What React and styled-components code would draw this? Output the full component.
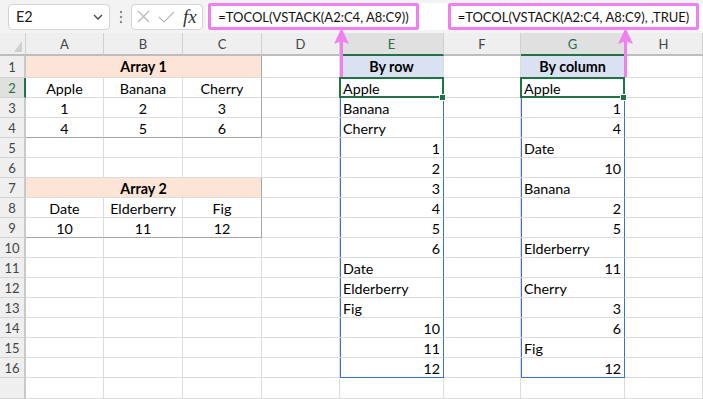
import React from 'react';
import styled, { createGlobalStyle } from 'styled-components';

const Global = createGlobalStyle`
  html, body { margin: 0; padding: 0; background: #fff; }
  body { font-family: Lato, "Liberation Sans", sans-serif; }
`;

const COLS = [26, 78, 79, 79, 78, 104, 77, 104, 78];
const PINK = '#f27ff0';
const GREEN = '#217346';
const BLUE = '#3a6fd0';
const GRID = '#dcdcdc';
const DARK = '#a6a6a6';

const Page = styled.div`
  position: relative;
  width: 703px;
  height: 399px;
  overflow: hidden;
  background: #fff;
`;

const Toolbar = styled.div`
  display: flex;
  align-items: center;
  height: 33px;
  background: #f3f3f3;
  padding-left: 8px;
  box-sizing: border-box;
`;

const NameBox = styled.div`
  width: 102px;
  height: 26px;
  box-sizing: border-box;
  border: 1px solid #d4d4d4;
  border-radius: 4px;
  background: #fff;
  display: flex;
  align-items: center;
  justify-content: space-between;
  padding: 0 6px 0 7px;
  font-size: 14.5px;
  color: #222;
`;

const Dots = styled.div`
  width: 21px;
  display: flex;
  justify-content: center;
  align-items: center;
`;

const FxBox = styled.div`
  width: 72px;
  height: 26px;
  box-sizing: border-box;
  border: 1px solid #d4d4d4;
  border-radius: 4px;
  background: #fff;
  display: flex;
  align-items: center;
  padding-left: 5px;
  gap: 8px;
`;

const Fx = styled.span`
  font-family: "Liberation Serif", serif;
  font-style: italic;
  font-size: 19px;
  color: #333;
  line-height: 1;
`;

const FormulaInput = styled.div`
  flex: 1;
  margin-left: 3px;
  height: 27px;
  background: #fff;
  display: flex;
  align-items: center;
  padding-left: 2px;
  gap: 29px;
`;

const Annot = styled.div`
  width: ${p => p.$w}px;
  height: 27px;
  box-sizing: border-box;
  border: 3px solid ${PINK};
  border-radius: 2px;
  display: flex;
  align-items: center;
  justify-content: center;
  font-size: 13px;
  color: #111;
  white-space: nowrap;
`;

const Sheet = styled.div`
  display: grid;
  grid-template-columns: ${COLS.map(c => c + 'px').join(' ')};
  grid-template-rows: 23px 22px repeat(15, 20px) 21px;
`;

const Corner = styled.div`
  position: relative;
  background: #efefef;
  box-sizing: border-box;
  border-right: 1px solid #d0d0d0;
  border-bottom: 2px solid #bdbdbd;
`;

const ColHead = styled.div`
  box-sizing: border-box;
  background: ${p => (p.$sel ? '#e0e0e0' : '#efefef')};
  border-right: 1px solid #d0d0d0;
  border-bottom: 2px solid ${p => (p.$sel ? GREEN : '#bdbdbd')};
  display: flex;
  align-items: center;
  justify-content: center;
  font-size: 13px;
  color: ${p => (p.$sel ? GREEN : '#444')};
`;

const RowHead = styled.div`
  box-sizing: border-box;
  background: ${p => (p.$sel ? '#e0e0e0' : '#efefef')};
  border-right: 2px solid ${p => (p.$sel ? GREEN : '#c8c8c8')};
  border-bottom: 1px solid #d4d4d4;
  display: flex;
  align-items: flex-end;
  justify-content: center;
  padding-bottom: ${p => (p.$tall ? 2 : 1)}px;
  font-size: 13px;
  color: ${p => (p.$sel ? GREEN : '#444')};
`;

const JUSTIFY = { left: 'flex-start', center: 'center', right: 'flex-end' };

const Cell = styled.div`
  position: relative;
  box-sizing: border-box;
  grid-column: span ${p => p.$span || 1};
  border-right: 1px solid ${p => p.$rb || GRID};
  border-bottom: 1px solid ${p => p.$bb || GRID};
  background: ${p => p.$bg || '#fff'};
  box-shadow: ${p => (p.$spill ? `inset 1px 0 0 ${BLUE}` : 'none')};
  display: flex;
  align-items: flex-end;
  justify-content: ${p => JUSTIFY[p.$align || 'left']};
  padding: 0 3px ${p => (p.$tall ? 2 : 0)}px 3px;
  font-size: 14.3px;
  font-weight: ${p => (p.$bold ? 700 : 400)};
  color: #000;
  white-space: nowrap;
`;

const ActiveFrame = styled.div`
  position: absolute;
  z-index: 2;
  left: -1px;
  top: -1px;
  right: -1px;
  bottom: -1px;
  border: 2px solid ${GREEN};
  pointer-events: none;
`;

const Handle = styled.div`
  position: absolute;
  z-index: 3;
  right: -3px;
  bottom: -4px;
  width: 5px;
  height: 5px;
  background: ${GREEN};
  border: 1px solid #fff;
`;

const Arrow = styled.svg`
  position: absolute;
  z-index: 5;
  top: 28px;
  left: ${p => p.$x}px;
`;

const E_VALS = ['Apple', 'Banana', 'Cherry', 1, 2, 3, 4, 5, 6, 'Date', 'Elderberry', 'Fig', 10, 11, 12];
const G_VALS = ['Apple', 1, 4, 'Date', 10, 'Banana', 2, 5, 'Elderberry', 11, 'Cherry', 3, 6, 'Fig', 12];
const ABC = {
  2: ['Apple', 'Banana', 'Cherry'],
  3: [1, 2, 3],
  4: [4, 5, 6],
  8: ['Date', 'Elderberry', 'Fig'],
  9: [10, 11, 12],
};

function SpillCell({ r, values, title }) {
  if (r === 1) {
    return (
      <Cell $bg="#d9e1f2" $bold $align="center" $tall>
        {title}
      </Cell>
    );
  }
  if (r > 16) return <Cell />;
  const v = values[r - 2];
  return (
    <Cell
      $spill
      $rb={BLUE}
      $bb={r === 16 ? BLUE : undefined}
      $align={typeof v === 'number' ? 'right' : 'left'}
    >
      {v}
      {r === 2 && (
        <>
          <ActiveFrame />
          <Handle />
        </>
      )}
    </Cell>
  );
}

function TableCells({ r }) {
  const inT1 = r >= 1 && r <= 4;
  const inT2 = r >= 7 && r <= 9;
  const bb = r === 4 || r === 9 ? DARK : undefined;
  if (r === 1 || r === 7) {
    return (
      <Cell $span={3} $bg="#fce4d6" $bold $align="center" $rb={DARK} $tall={r === 1}>
        {r === 1 ? 'Array 1' : 'Array 2'}
      </Cell>
    );
  }
  const vals = ABC[r] || ['', '', ''];
  return vals.map((v, i) => (
    <Cell key={i} $align="center" $bb={bb} $rb={i === 2 && (inT1 || inT2) ? DARK : undefined}>
      {v}
    </Cell>
  ));
}

function PinkArrow({ x }) {
  return (
    <Arrow $x={x} width="15" height="49" viewBox="0 0 15 49">
      <rect x="6" y="12" width="3" height="37" fill={PINK} />
      <polygon points="7.5,0 0,16 7.5,13 15,16" fill={PINK} />
    </Arrow>
  );
}

export default function App() {
  const rows = Array.from({ length: 17 }, (_, i) => i + 1);
  const letters = ['A', 'B', 'C', 'D', 'E', 'F', 'G', 'H'];
  return (
    <Page>
      <Global />
      <Toolbar>
        <NameBox>
          <span>E2</span>
          <svg width="10" height="6" viewBox="0 0 10 6">
            <polyline points="1,1 5,5 9,1" fill="none" stroke="#444" strokeWidth="1.3" />
          </svg>
        </NameBox>
        <Dots>
          <svg width="4" height="14" viewBox="0 0 4 14">
            <circle cx="2" cy="2" r="1.2" fill="#8a8a8a" />
            <circle cx="2" cy="7" r="1.2" fill="#8a8a8a" />
            <circle cx="2" cy="12" r="1.2" fill="#8a8a8a" />
          </svg>
        </Dots>
        <FxBox>
          <svg width="13" height="13" viewBox="0 0 13 13">
            <line x1="1" y1="1" x2="12" y2="12" stroke="#b8b8b8" strokeWidth="1.2" />
            <line x1="12" y1="1" x2="1" y2="12" stroke="#b8b8b8" strokeWidth="1.2" />
          </svg>
          <svg width="17" height="12" viewBox="0 0 17 12">
            <polyline points="1,6 6,11 16,1" fill="none" stroke="#b8b8b8" strokeWidth="1.2" />
          </svg>
          <Fx>fx</Fx>
        </FxBox>
        <FormulaInput>
          <Annot $w={211}>=TOCOL(VSTACK(A2:C4, A8:C9))</Annot>
          <Annot $w={251}>=TOCOL(VSTACK(A2:C4, A8:C9), ,TRUE)</Annot>
        </FormulaInput>
      </Toolbar>
      <Sheet>
        <Corner>
          <svg
            width="8"
            height="11"
            viewBox="0 0 8 11"
            style={{ position: 'absolute', right: 3, bottom: 2 }}
          >
            <polygon points="8,0 8,11 0,11" fill="#cfcfcf" />
          </svg>
        </Corner>
        {letters.map(l => (
          <ColHead key={l} $sel={l === 'E' || l === 'G'}>
            {l}
          </ColHead>
        ))}
        {rows.map(r => (
          <React.Fragment key={r}>
            <RowHead $sel={r === 2} $tall={r === 1}>
              {r <= 16 ? r : ''}
            </RowHead>
            <TableCells r={r} />
            <Cell />
            <SpillCell r={r} values={E_VALS} title="By row" />
            <Cell />
            <SpillCell r={r} values={G_VALS} title="By column" />
            <Cell />
          </React.Fragment>
        ))}
      </Sheet>
      <PinkArrow x={334} />
      <PinkArrow x={618} />
    </Page>
  );
}
